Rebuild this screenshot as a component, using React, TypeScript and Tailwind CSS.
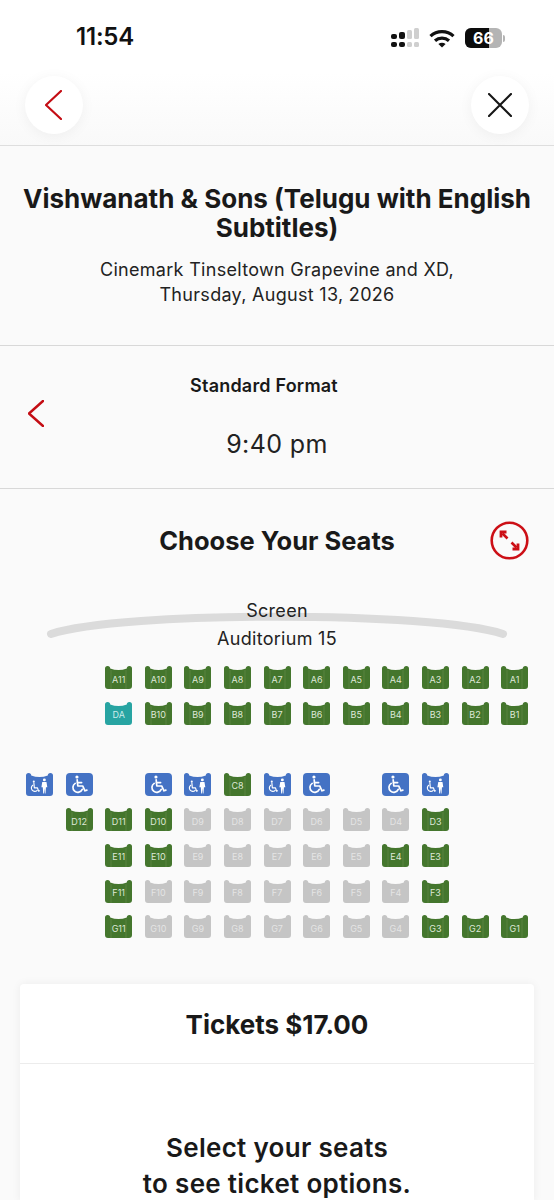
type Kind = "open" | "taken" | "companion" | "wheel" | "teal";
type Seat = { label?: string; kind: Kind } | null;

const open = (label: string): Seat => ({ label, kind: "open" });
const taken = (label: string): Seat => ({ label, kind: "taken" });
const comp: Seat = { kind: "companion" };
const wheel: Seat = { kind: "wheel" };

// 13 columns, one entry per cell, null is an empty spot
const ROWS: Seat[][] = [
  [null, null, ...["A11", "A10", "A9", "A8", "A7", "A6", "A5", "A4", "A3", "A2", "A1"].map(open)],
  [null, null, { label: "DA", kind: "teal" }, ...["B10", "B9", "B8", "B7", "B6", "B5", "B4", "B3", "B2", "B1"].map(open)],
  Array(13).fill(null),
  [comp, wheel, null, wheel, comp, open("C8"), comp, wheel, null, wheel, comp, null, null],
  [null, open("D12"), open("D11"), open("D10"), ...["D9", "D8", "D7", "D6", "D5", "D4"].map(taken), open("D3"), null, null],
  [null, null, open("E11"), open("E10"), ...["E9", "E8", "E7", "E6", "E5"].map(taken), open("E4"), open("E3"), null, null],
  [null, null, open("F11"), ...["F10", "F9", "F8", "F7", "F6", "F5", "F4"].map(taken), open("F3"), null, null],
  [null, null, open("G11"), ...["G10", "G9", "G8", "G7", "G6", "G5", "G4"].map(taken), open("G3"), open("G2"), open("G1")],
];

const FILL: Record<Kind, string> = {
  open: "#44762d",
  taken: "#c5c5c5",
  companion: "#4472c4",
  wheel: "#4472c4",
  teal: "#27a4a2",
};

function WheelIcon({ size = 19 }: { size?: number }) {
  return (
    <svg width={size} height={size} viewBox="0 0 18 18" fill="none" stroke="#fff" strokeWidth="1.6" strokeLinecap="round" strokeLinejoin="round">
      <circle cx="6.6" cy="1.9" r="1.5" fill="#fff" stroke="none" />
      <path d="M6.8 4.6 7.4 10.4H12L14.2 15 16 14.3" />
      <path d="M7.1 7.2H11" />
      <path d="M4.9 7.9A4.6 4.6 0 1 0 11.6 13.6" />
    </svg>
  );
}

function CompanionIcon() {
  return (
    <svg width="19" height="16" viewBox="0 0 18 15" fill="none" stroke="#fff" strokeLinecap="round" strokeLinejoin="round">
      <circle cx="3.6" cy="3.4" r="1" fill="#fff" stroke="none" />
      <path d="M3.7 5 4.1 9.2H7L8.2 12.4 9 12" strokeWidth="1.1" />
      <path d="M2.6 6.8A3.2 3.2 0 1 0 6.8 11.6" strokeWidth="1.1" />
      <circle cx="13.6" cy="1.7" r="1.4" fill="#fff" stroke="none" />
      <path d="M11.6 3.6H15.6L16.4 8.6H15.1L14.7 14.6H14L13.6 9.6 13.2 14.6H12.5L12.1 8.6H10.8Z" fill="#fff" stroke="none" />
    </svg>
  );
}

function SeatCell({ seat }: { seat: Seat }) {
  if (!seat) return <div className="h-[23px] w-[27px]" />;
  const isFlat = seat.kind === "wheel";
  const hasLines = seat.kind === "open";
  return (
    <div className="relative flex h-[23px] w-[27px] items-center justify-center">
      <svg className="absolute inset-0" width="27" height="23" viewBox="0 0 27 23">
        {isFlat ? (
          <rect width="27" height="23" rx="4" fill={FILL[seat.kind]} />
        ) : (
          <path
            d="M0 2.6A2.6 2.6 0 0 1 5.2 2.6Q13.5 5.6 21.8 2.6A2.6 2.6 0 0 1 27 2.6V20A3 3 0 0 1 24 23H3A3 3 0 0 1 0 20Z"
            fill={FILL[seat.kind]}
          />
        )}
        {hasLines && <path d="M6 4V23M21 4V23" stroke="#6d9256" strokeWidth="0.5" />}
      </svg>
      {seat.label && (
        <span
          className={`relative mt-[3px] text-[9px] leading-none ${
            seat.kind === "taken" ? "text-[#e4e4e4]" : seat.kind === "teal" ? "text-[#cdeceb]" : "text-[#dfe8d8]"
          }`}
        >
          {seat.label}
        </span>
      )}
      {seat.kind === "wheel" && (
        <span className="relative">
          <WheelIcon />
        </span>
      )}
      {seat.kind === "companion" && (
        <span className="relative mt-[3px]">
          <CompanionIcon />
        </span>
      )}
    </div>
  );
}

function StatusIcons() {
  return (
    <div className="mt-[6px] flex items-center">
      <svg width="29" height="20" viewBox="0 0 29 20">
        <rect x="0" y="6" width="6" height="5" rx="2" fill="#111" />
        <rect x="0" y="14" width="6" height="5" rx="2" fill="#111" />
        <rect x="8" y="4" width="6" height="7" rx="2" fill="#111" />
        <rect x="8" y="14" width="6" height="5" rx="2" fill="#111" />
        <rect x="16" y="2" width="5" height="9" rx="1.5" fill="#cfcfcf" />
        <rect x="16" y="14" width="5" height="5" rx="1.5" fill="#cfcfcf" />
        <rect x="23" y="0" width="5" height="11" rx="1.5" fill="#cfcfcf" />
        <rect x="23" y="14" width="5" height="5" rx="1.5" fill="#cfcfcf" />
      </svg>
      <svg className="ml-[9px]" width="26" height="19" viewBox="0 0 26 19" fill="none" stroke="#111" strokeWidth="3.2">
        <path d="M1.5 7.2C7.8 1.2 18.2 1.2 24.5 7.2" />
        <path d="M6 11.8C9.9 8.3 16.1 8.3 20 11.8" />
        <path d="M13 18.5 9.4 15C11.5 13.4 14.5 13.4 16.6 15Z" fill="#111" stroke="none" />
      </svg>
      <div className="relative ml-[10px] flex h-[20px] w-[37px] items-center justify-center overflow-hidden rounded-[6px] bg-[#b4b4b4]">
        <div className="absolute inset-y-0 left-0 w-[24px] bg-[#0c0c0c]" />
        <span className="relative text-[16px] font-bold leading-none text-white">66</span>
      </div>
      <div className="ml-[1px] h-[7px] w-[2px] rounded-r-full bg-[#b4b4b4]" />
    </div>
  );
}

function RedChevron({ w, h, weight }: { w: number; h: number; weight: number }) {
  return (
    <svg width={w} height={h} viewBox={`0 0 ${w} ${h}`} fill="none" stroke="#c40d14" strokeWidth={weight} strokeLinecap="round" strokeLinejoin="round">
      <path d={`M${w - 1} 1 1 ${h / 2} ${w - 1} ${h - 1}`} />
    </svg>
  );
}

export default function App() {
  return (
    <div className="h-[1200px] w-full overflow-hidden bg-[#fafafa] font-['Inter',sans-serif] text-[#191919]">
      {/* top bar */}
      <header className="h-[146px] border-b border-[#dedede] bg-[linear-gradient(#fff_50%,#f9f9f9)]">
        <div className="flex h-[76px] items-start justify-between pl-[76px] pr-[49px] pt-[22px]">
          <span className="text-[24px] font-semibold leading-[30px] tracking-[-0.2px] text-[#111]">11:54</span>
          <StatusIcons />
        </div>
        <div className="flex items-center justify-between px-[25px]">
          <button className="flex h-[58px] w-[58px] items-center justify-center rounded-full bg-white pr-[2px] shadow-[0_2px_14px_rgba(0,0,0,0.05)]">
            <RedChevron w={17} h={30} weight={2.2} />
          </button>
          <button className="flex h-[58px] w-[58px] items-center justify-center rounded-full bg-white shadow-[0_2px_14px_rgba(0,0,0,0.05)]">
            <svg width="24" height="24" viewBox="0 0 24 24" fill="none" stroke="#161616" strokeWidth="2.1" strokeLinecap="round">
              <path d="M1 1 23 23M23 1 1 23" />
            </svg>
          </button>
        </div>
      </header>

      {/* movie */}
      <section className="border-b border-[#d8d8d8] px-5 pb-[38px] pt-[38px] text-center">
        <h1 className="text-[26px] font-bold leading-[29px]">Vishwanath &amp; Sons (Telugu with English Subtitles)</h1>
        <p className="mt-[15px] text-[18px] leading-[25px] tracking-[0.3px] text-[#222]">
          Cinemark Tinseltown Grapevine and XD,
          <br />
          Thursday, August 13, 2026
        </p>
      </section>

      {/* showtime */}
      <section className="flex h-[143px] items-center border-b border-[#d8d8d8] pl-[28px]">
        <span className="-mt-[8px] shrink-0">
          <RedChevron w={16} h={27} weight={2.4} />
        </span>
        <div className="flex-1 pr-[44px] text-center">
          <div className="pr-[26px] text-[18px] font-semibold leading-6 tracking-[0.2px]">Standard Format</div>
          <div className="mt-[30px] text-[25px] leading-8 tracking-[0.4px] text-[#222]">9:40 pm</div>
        </div>
      </section>

      {/* seat map */}
      <section className="pt-[32px]">
        <div className="grid grid-cols-[1fr_auto_1fr] items-center">
          <div />
          <h2 className="text-[25.5px] font-bold leading-[38px]">Choose Your Seats</h2>
          <div className="flex justify-end pr-[25px]">
            <svg width="39" height="39" viewBox="0 0 39 39" fill="none" stroke="#cc0f16" strokeWidth="2.6">
              <circle cx="19.5" cy="19.5" r="17.8" />
              <path d="M12.5 12.5 17.5 17.5M21.5 21.5 26.5 26.5" strokeWidth="2.6" />
              <path d="M11 16.5V11H16.5M28 22.5V28H22.5" strokeWidth="2.8" />
            </svg>
          </div>
        </div>

        <div className="relative mt-[36px] h-[56px] text-center text-[18px] leading-[28px] tracking-[0.3px] text-[#222]">
          <svg className="absolute left-0 top-0" width="554" height="56" viewBox="0 0 554 56" fill="none">
            <path d="M51 38C120 15 434 15 503 38" stroke="#dbdbdb" strokeWidth="8" strokeLinecap="round" />
          </svg>
          <div className="relative pt-[1px]">Screen</div>
          <div className="relative">Auditorium 15</div>
        </div>

        <div className="mt-[14px] grid grid-cols-[repeat(13,27px)] gap-[12.6px] pl-[26px]">
          {ROWS.flat().map((seat, i) => (
            <SeatCell key={i} seat={seat} />
          ))}
        </div>
      </section>

      {/* tickets */}
      <section className="mx-[20px] mt-[46px] rounded-t-[4px] bg-white text-center shadow-[0_0_10px_rgba(0,0,0,0.06)]">
        <div className="flex h-[80px] items-center justify-center border-b border-[#ececec] pt-[1px] text-[26px] font-bold">Tickets $17.00</div>
        <p className="pt-[66px] text-[26px] font-semibold leading-[36px] tracking-[0.3px]">
          Select your seats
          <br />
          to see ticket options.
        </p>
      </section>
    </div>
  );
}
